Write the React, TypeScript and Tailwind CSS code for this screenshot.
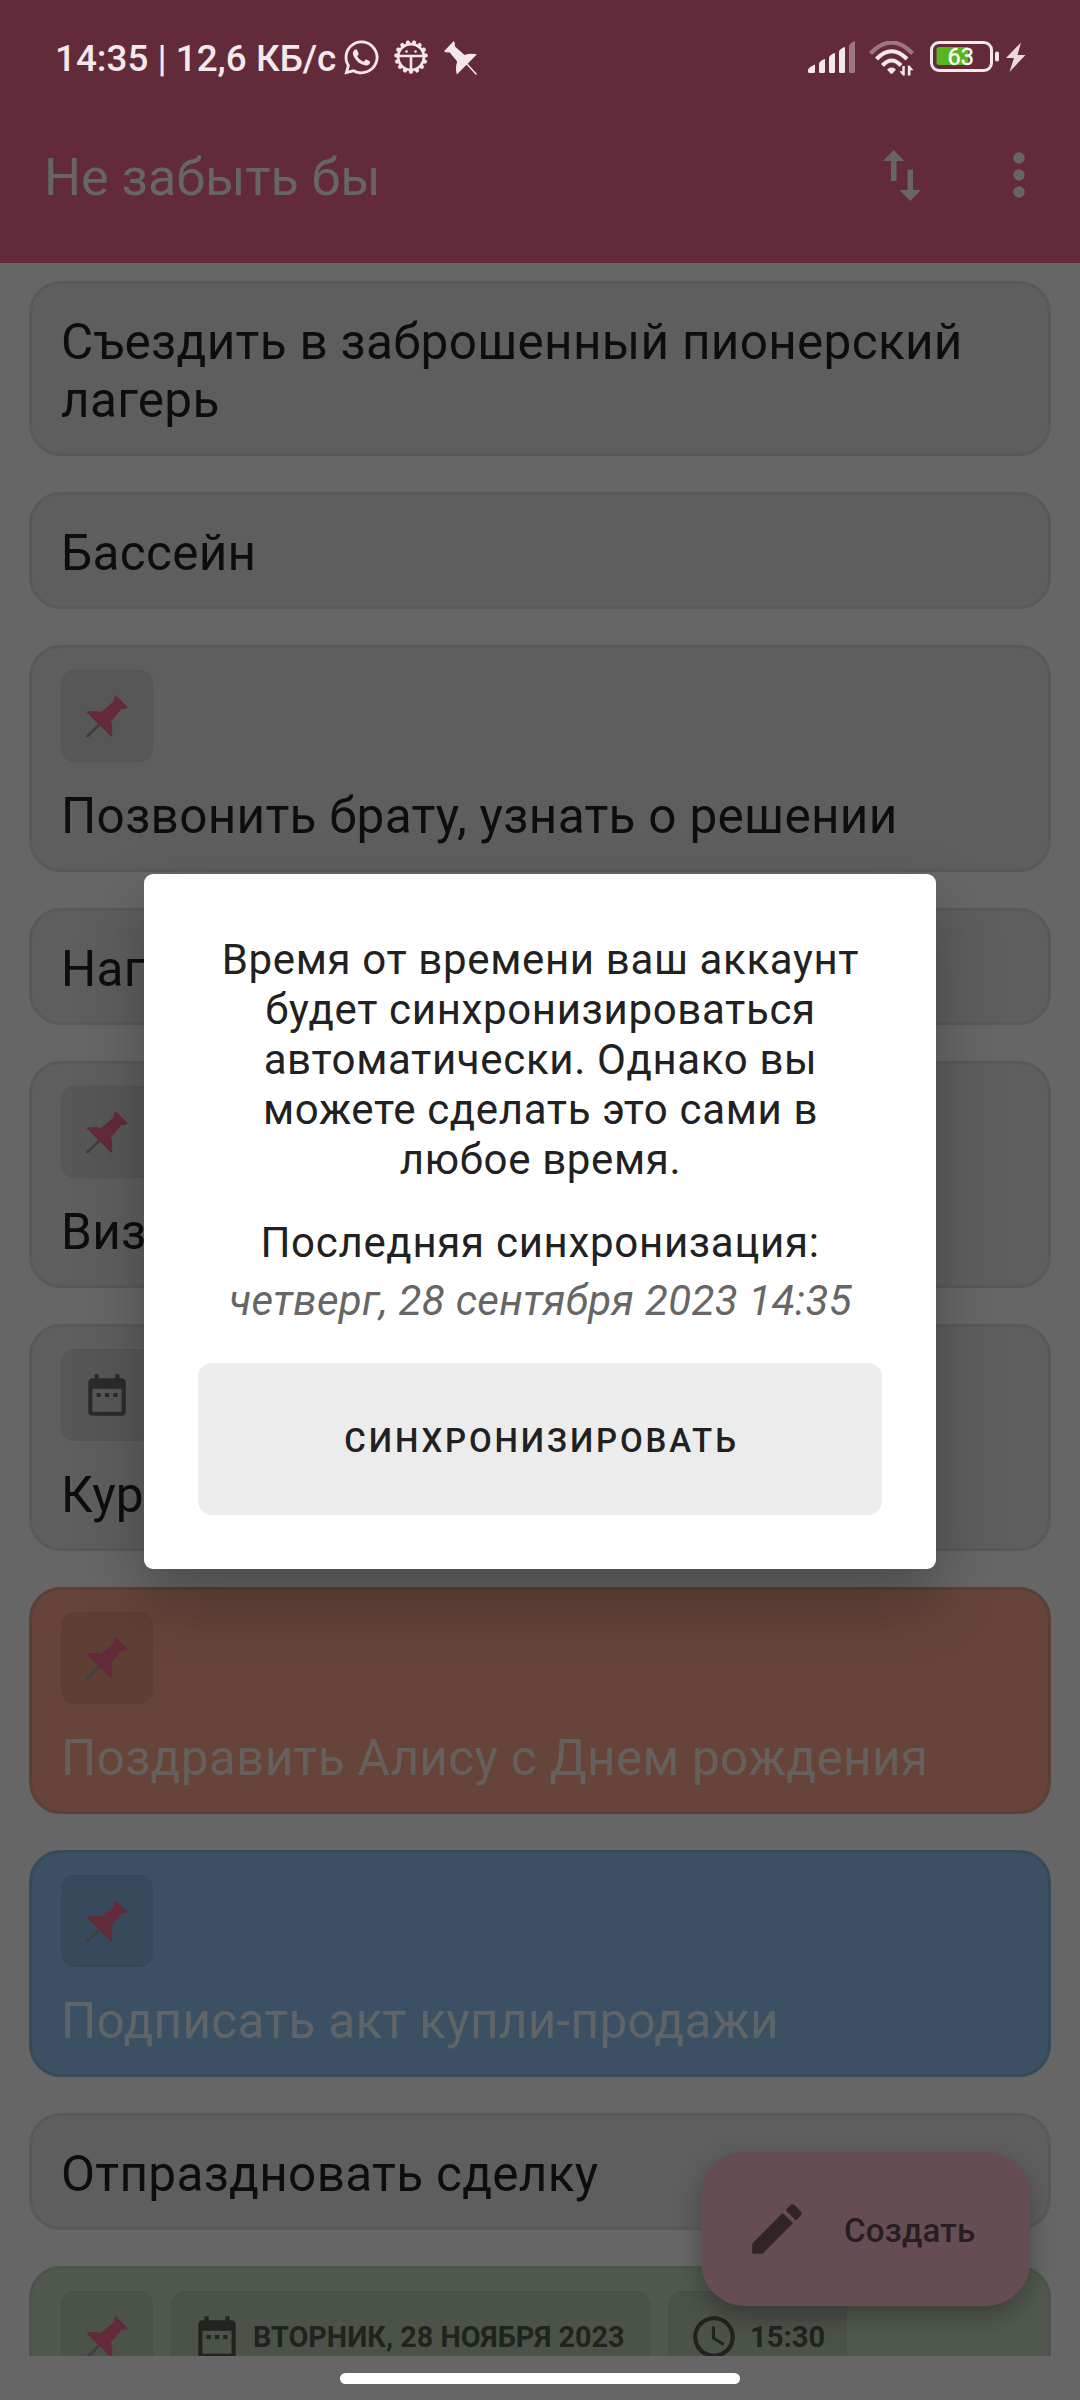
import type { ReactNode } from 'react';
import { FaWhatsapp } from 'react-icons/fa';

const TEETH = Array.from({ length: 15 }, (_, i) => i * 24);

const PinIcon = () => (
  <svg viewBox="0 0 42 42" className="h-[42px] w-[42px]">
    <path d="M1.5 41 L15 28" stroke="#3f3f3f" strokeWidth="3" strokeLinecap="round" />
    <path d="M29.500 0 L42 12.500 Q39 14.500 35.500 13.800 L25 26.500 Q27.500 34 25.500 42 L0 16.800 Q7 15 15 17 L28 6 Q27.500 3 29.500 0Z" fill="#632b39" />
  </svg>
);

const CalendarIcon = () => (
  <svg viewBox="0 0 24 24" className="h-[50px] w-[50px] shrink-0" fill="currentColor">
    <path d="M9 11H7v2h2v-2zm4 0h-2v2h2v-2zm4 0h-2v2h2v-2zm2-7h-1V2h-2v2H8V2H6v2H5c-1.110 0-1.990.9-1.990 2L3 20c0 1.100.890 2 2 2h14c1.100 0 2-.9 2-2V6c0-1.100-.9-2-2-2zm0 16H5V9h14v11z" />
  </svg>
);

const ClockIcon = () => (
  <svg viewBox="0 0 24 24" className="h-[50px] w-[50px] shrink-0" fill="currentColor">
    <path d="M11.990 2C6.470 2 2 6.480 2 12s4.470 10 9.990 10C17.520 22 22 17.520 22 12S17.520 2 11.990 2zM12 20c-4.420 0-8-3.580-8-8s3.580-8 8-8 8 3.580 8 8-3.580 8-8 8zm.5-13H11v6l5.250 3.150.750-1.230-4.500-2.670z" />
  </svg>
);

function Chip({ children, className = '' }: { children: ReactNode; className?: string }) {
  return (
    <div className={`flex h-[92px] shrink-0 items-center whitespace-nowrap rounded-[14px] border border-black/4 bg-black/7 ${className}`}>
      {children}
    </div>
  );
}

const PinChip = () => (
  <Chip className="w-[92px] justify-center">
    <PinIcon />
  </Chip>
);

function Card({ title, chips, className = 'bg-[#5e5e5e] border-[#595959] text-[#0d0d0d]' }: { title?: string; chips?: ReactNode; className?: string }) {
  return (
    <div className={`flex shrink-0 flex-col rounded-[32px] border-[3px] px-[29px] pb-6 ${chips ? 'pt-[22px]' : 'pt-[29px]'} ${className}`}>
      {chips && <div className="mb-[25px] flex gap-[18px]">{chips}</div>}
      {title && <p className="text-[49.500px] leading-[58px] tracking-[0.300px]">{title}</p>}
    </div>
  );
}

function StatusBar() {
  return (
    <div className="flex h-[118px] items-center justify-between pl-[55px] pr-[54px] text-[#f3e9ec]">
      <div className="flex items-center">
        <span className="w-[287px] whitespace-nowrap text-[36.800px] font-medium leading-[44px]">14:35 | 12,6 КБ/с</span>
        <FaWhatsapp className="-mt-[4px] h-[39px] w-[39px]" />
        <svg viewBox="-17 -17 34 34" className="-mt-[4px] ml-[13px] h-[34px] w-[34px]" fill="none" stroke="currentColor">
          <circle r="12.8" strokeWidth="2.600" />
          {TEETH.map((a) => (
            <path key={a} d="M-2.200 -13.500 L-1.600 -16 Q0 -17.500 1.600 -16 L2.200 -13.500Z" fill="currentColor" strokeWidth="0.300" transform={`rotate(${a + 12})`} />
          ))}
          <path d="M-12 -1 H12 M0 0 V13" strokeWidth="2.600" />
          <circle cx="-4.500" cy="-5.500" r="1.300" fill="currentColor" stroke="none" />
          <circle cx="4.500" cy="-5.500" r="1.300" fill="currentColor" stroke="none" />
        </svg>
        <svg viewBox="0 0 34 34" className="-mt-[3px] ml-[16px] h-[34px] w-[34px]">
          <path d="M22 22 L32.500 33.500" stroke="currentColor" strokeWidth="1.500" />
          <path d="M9.800 0 Q11.500 2 11 5.500 L20.500 14 Q26.500 11.800 33 13.300 L12.800 33.500 Q11 27 13.200 20.500 L5.500 11.200 Q2.500 12.200 0 10.300Z" fill="currentColor" />
        </svg>
      </div>
      <svg viewBox="0 0 218 36" className="h-9 w-[218px]" fill="currentColor">
        <path d="M0 29 Q0 26.500 7 23.500 V30.500 Q7 32 5.500 32 H1.500 Q0 32 0 30.500Z" />
        <path d="M11 22.500 Q12 19.500 17 18 V30.500 Q17 32 15.500 32 H12.500 Q11 32 11 30.500Z" />
        <path d="M21 16.500 Q22 13.500 27 12 V30.500 Q27 32 25.500 32 H22.500 Q21 32 21 30.500Z" />
        <path d="M31 10.500 Q32 7.500 37 6 V30.500 Q37 32 35.500 32 H32.500 Q31 32 31 30.500Z" />
        <path d="M41 5 Q42 1.500 47 0 V30.500 Q47 32 45.500 32 H42.500 Q41 32 41 30.500Z" opacity="0.400" />
        <g fill="none" stroke="currentColor" strokeWidth="4.200">
          <path d="M62.500 12.500 Q83.500 -9.500 104.500 12.500" opacity="0.400" />
          <path d="M68.500 18 Q83.500 2.500 99 18" />
          <path d="M74.500 24.500 Q83.500 14.500 93 24.500" />
        </g>
        <path d="M79 28.500 Q83.500 24.500 88 28.500 L84.500 32.500 Q83.500 33.300 82.500 32.500Z" />
        <path d="M96.800 25 V34.500 H94.800 L91.500 30.200 H94.300 V25Z M99.800 34.500 V24.500 H101.600 L105.500 29.300 H102.500 V34.500Z" />
        <rect x="123.500" y="1.500" width="60" height="28" rx="7.500" fill="none" stroke="currentColor" strokeWidth="3" />
        <path d="M131 6 H160.500 V24 H131 Q128.500 24 128.500 21.500 V8.500 Q128.500 6 131 6Z" fill="#58b51b" />
        <rect x="187" y="10.500" width="4" height="10" rx="1.800" />
        <text x="152.800" y="24" textAnchor="middle" fontSize="23.500" fontWeight="400" fill="#ffffff" stroke="#ffffff" strokeWidth="0.300">63</text>
        <path d="M213 1.500 L198 17 H206 L201.500 31 L217.500 14 H209.500Z" opacity="0.920" />
      </svg>
    </div>
  );
}

export default function App() {
  return (
    <div className="relative flex h-[2400px] w-[1080px] flex-col overflow-hidden bg-[#666666] font-[Roboto,sans-serif]">
      <header className="h-[263px] shrink-0 bg-[#632b39]">
        <StatusBar />
        <div className="flex h-[120px] items-center justify-between pl-11 pr-[55px] text-[#666666]">
          <h1 className="text-[52px] leading-[60px]">Не забыть бы</h1>
          <div className="-mt-[6px] flex items-center gap-[92px] fill-[#666666]">
            <svg viewBox="0 0 38 51" className="h-[51px] w-[38px]">
              <path d="M10.700 0 L21.500 11 H13.500 V31 H8 V11 H0Z M24.500 19.500 H30 V40 H38 L27.200 51 L16.500 40 H24.500Z" />
            </svg>
            <svg viewBox="0 0 12 46" className="h-[46px] w-[12px]">
              <circle cx="6" cy="6" r="5.700" />
              <circle cx="6" cy="23" r="5.700" />
              <circle cx="6" cy="40" r="5.700" />
            </svg>
          </div>
        </div>
      </header>

      <main className="flex h-[2093px] shrink-0 flex-col gap-9 overflow-hidden px-[29px] pt-[18px]">
        <Card title="Съездить в заброшенный пионерский лагерь" />
        <Card title="Бассейн" />
        <Card title="Позвонить брату, узнать о решении" chips={<PinChip />} />
        <Card title="Нап" />
        <Card title="Виз" chips={<PinChip />} />
        <Card title="Кур" chips={<Chip className="w-[92px] justify-center text-[#2b2b2b]"><CalendarIcon /></Chip>} />
        <Card title="Поздравить Алису с Днем рождения" chips={<PinChip />} className="border-[#5c4036] bg-[#664439] text-[#66605d]" />
        <Card title="Подписать акт купли-продажи" chips={<PinChip />} className="border-[#374a58] bg-[#3b5063] text-[#5f6468]" />
        <Card title="Отпраздновать сделку" />
        <Card
          className="border-[#4a564c] bg-[#51594e]"
          chips={
            <>
              <PinChip />
              <Chip className="w-[479px] gap-[11px] pl-5 text-[28.800px] font-bold text-[#1f241f]"><CalendarIcon /><span className="mt-[2px]">ВТОРНИК, 28 НОЯБРЯ 2023</span></Chip>
              <Chip className="w-[179px] gap-[11px] pl-5 text-[29.200px] font-bold text-[#1f241f]"><ClockIcon /><span className="mt-[2px]">15:30</span></Chip>
            </>
          }
        />
      </main>

      <div className="absolute left-[701px] top-[2152px] flex h-[154px] w-[329px] items-center rounded-[44px] bg-[#664d53] pl-[43px] text-[#281d20] shadow-[0_10px_24px_rgba(0,0,0,0.280)]">
        <svg viewBox="0 0 24 24" className="h-[66px] w-[66px]" fill="#312326">
          <path d="M3 17.250V21h3.750L17.810 9.940l-3.750-3.750L3 17.250zM20.710 7.040c.390-.390.390-1.020 0-1.410l-2.340-2.340c-.390-.390-1.020-.390-1.410 0l-1.830 1.830 3.750 3.750 1.830-1.830z" />
        </svg>
        <span className="ml-[34px] mt-[3px] text-[33px] font-medium tracking-[0.250px]">Создать</span>
      </div>

      <div className="absolute left-36 top-[874px] flex h-[695px] w-[792px] flex-col rounded-[9px] bg-white px-[54px] pt-[61px] text-center text-[#212121] shadow-[0_32px_64px_rgba(0,0,0,0.260)]">
        <p className="pl-px text-[42px] leading-[50px] tracking-[0.650px]">Время от времени ваш аккаунт<br />будет синхронизироваться<br />автоматически. Однако вы<br />можете сделать это сами в<br />любое время.</p>
        <p className="mt-[33px] text-[42px] leading-[50px] tracking-[0.700px]">Последняя синхронизация:</p>
        <p className="mt-2 pl-px text-[42px] italic leading-[50px] tracking-[0.350px] text-[#666666]">четверг, 28 сентября 2023 14:35</p>
        <button className="mt-[37px] h-[152px] rounded-[14px] bg-[#ececec] pl-[3px] pt-[4px] text-[33px] font-medium tracking-[2.850px]">СИНХРОНИЗИРОВАТЬ</button>
      </div>

      <div className="flex flex-1 items-start justify-center pt-[17px]">
        <div className="h-[11px] w-[400px] rounded-full bg-white" />
      </div>
    </div>
  );
}
